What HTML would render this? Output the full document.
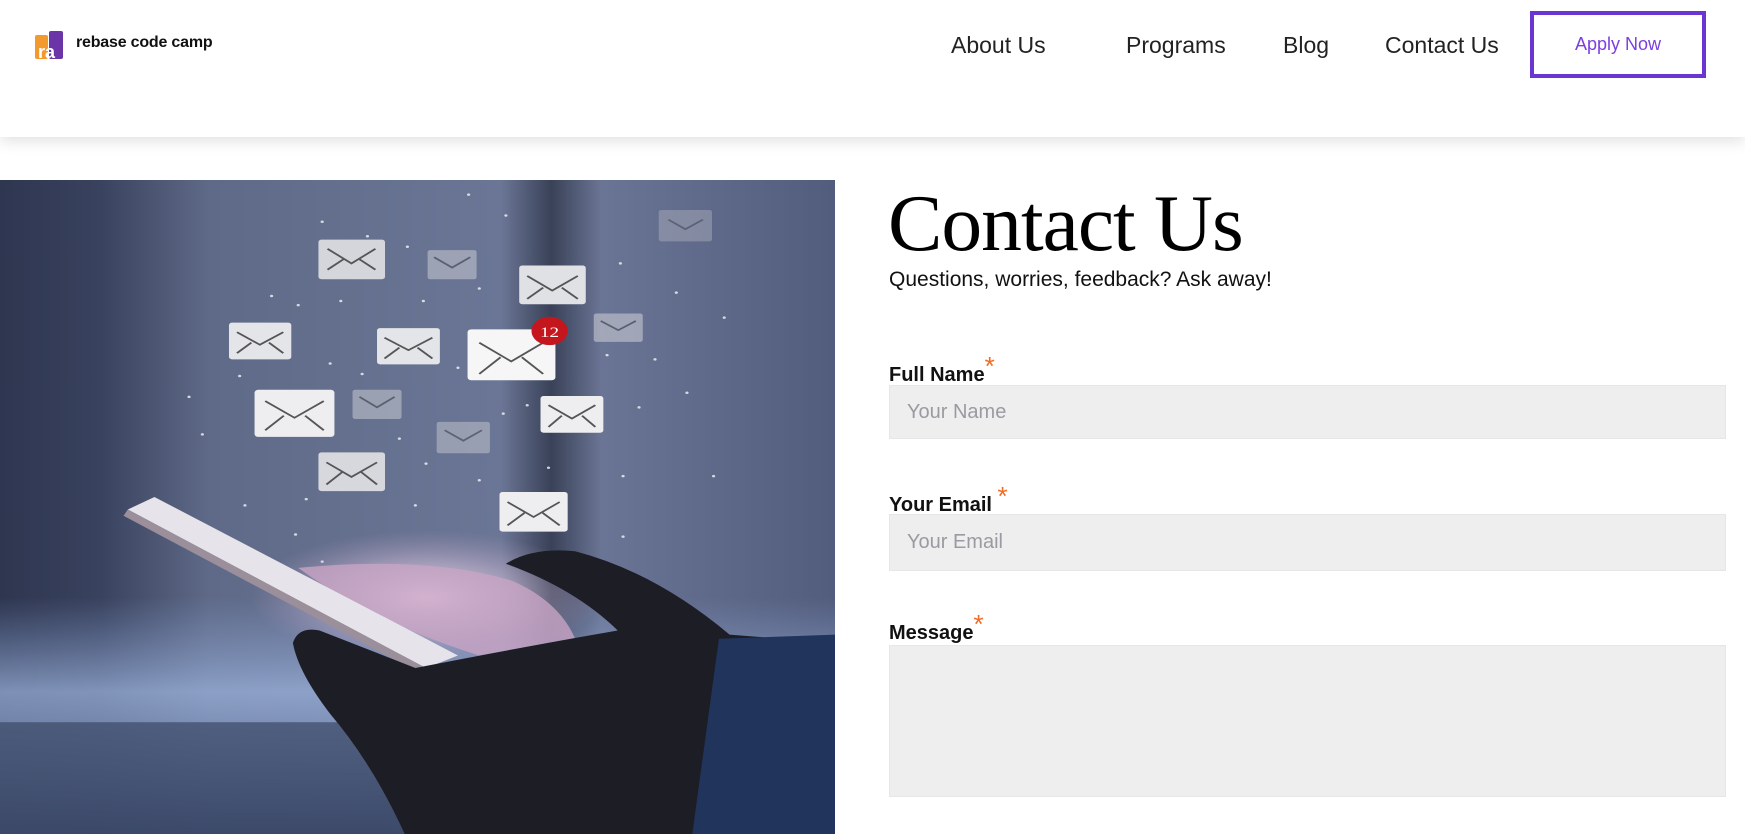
<!DOCTYPE html>
<html><head><meta charset="utf-8"><style>
*{margin:0;padding:0;box-sizing:border-box}
body{width:1745px;height:834px;overflow:hidden;background:#fff;font-family:"Liberation Sans",sans-serif;position:relative}
.hdr{position:absolute;left:0;top:0;width:1745px;height:137px;background:#fff;box-shadow:0 4px 14px rgba(0,0,0,.12);z-index:2}
.logo{position:absolute;left:35px;top:31px;width:28px;height:28px}
.brand{position:absolute;left:76px;top:34px;font-size:16px;font-weight:bold;color:#111;letter-spacing:-.2px}
.nav{position:absolute;top:32px;font-size:23px;color:#222}
.apply{position:absolute;left:1530px;top:11px;width:176px;height:67px;border:4px solid #6a35d1;color:#7b3fe0;font-size:18px;text-align:center;line-height:59px}
.img{position:absolute;left:0;top:180px;width:835px;height:654px}
h1{position:absolute;left:888px;top:184px;font-family:"Liberation Serif",serif;font-weight:normal;font-size:80px;color:#000;letter-spacing:-1px;line-height:1;transform:scaleX(1.02);transform-origin:left}
.sub{position:absolute;left:889px;top:268px;font-size:21px;color:#111}
.lbl{position:absolute;left:889px;font-size:20px;font-weight:bold;color:#111;z-index:1}
.lbl span{color:#f26b21;font-weight:normal;font-size:26px;position:relative;top:-6px}
.inp{position:absolute;left:889px;width:837px;background:#eee;border:1px solid #e6e6e6;color:#9a9aa2;font-size:20px;padding-left:17px}
</style></head><body>
<div class="hdr">
<svg class="logo" viewBox="0 0 28 28"><rect x="0" y="4" width="13" height="24" rx="2" fill="#f29a2e"/><rect x="14" y="0" width="14" height="28" rx="2" fill="#6b35a8"/><text x="3" y="27" font-family="Liberation Sans" font-size="18" font-weight="bold" fill="#fff">ra</text></svg>
<div class="brand">rebase code camp</div>
<div class="nav" style="left:951px">About Us</div>
<div class="nav" style="left:1126px">Programs</div>
<div class="nav" style="left:1283px">Blog</div>
<div class="nav" style="left:1385px">Contact Us</div>
<div class="apply">Apply Now</div>
</div>
<svg class="img" viewBox="0 0 1568 1568" preserveAspectRatio="none">
<defs>
<linearGradient id="bg" x1="0" y1="0" x2="1" y2="0"><stop offset="0" stop-color="#2e3650"/><stop offset=".12" stop-color="#39425e"/><stop offset=".25" stop-color="#5f6a88"/><stop offset=".6" stop-color="#6b7696"/><stop offset=".66" stop-color="#3a4258"/><stop offset=".72" stop-color="#6a7494"/><stop offset="1" stop-color="#525c7c"/></linearGradient>
<linearGradient id="band" x1="0" y1="0" x2="0" y2="1"><stop offset="0" stop-color="#8aa4d6" stop-opacity="0"/><stop offset=".4" stop-color="#9fb6e0" stop-opacity=".7"/><stop offset="1" stop-color="#3b4a70" stop-opacity=".9"/></linearGradient>
<radialGradient id="glow" cx=".5" cy=".5" r=".5"><stop offset="0" stop-color="#f4e8f6"/><stop offset="1" stop-color="#c8a6c8" stop-opacity="0"/></radialGradient>
</defs>
<rect width="1568" height="1568" fill="url(#bg)"/>
<rect y="1000" width="1568" height="568" fill="url(#band)"/>
<rect y="1300" width="1568" height="268" fill="#3c4866" opacity=".7"/>
<g fill="#fff" opacity=".75">
<circle cx="605" cy="100" r="3"/><circle cx="690" cy="135" r="3"/><circle cx="765" cy="160" r="3"/><circle cx="880" cy="35" r="3"/><circle cx="950" cy="85" r="3"/><circle cx="510" cy="278" r="3"/><circle cx="560" cy="300" r="3"/><circle cx="640" cy="290" r="3"/><circle cx="795" cy="290" r="3"/><circle cx="900" cy="260" r="3"/><circle cx="620" cy="440" r="3"/><circle cx="450" cy="470" r="3"/><circle cx="355" cy="520" r="3"/><circle cx="380" cy="610" r="3"/><circle cx="750" cy="620" r="3"/><circle cx="800" cy="680" r="3"/><circle cx="460" cy="780" r="3"/><circle cx="575" cy="765" r="3"/><circle cx="780" cy="780" r="3"/><circle cx="900" cy="720" r="3"/><circle cx="1030" cy="690" r="3"/><circle cx="1170" cy="710" r="3"/><circle cx="1340" cy="710" r="3"/><circle cx="1200" cy="545" r="3"/><circle cx="1290" cy="510" r="3"/><circle cx="1165" cy="200" r="3"/><circle cx="1270" cy="270" r="3"/><circle cx="1360" cy="330" r="3"/><circle cx="555" cy="850" r="3"/><circle cx="1170" cy="855" r="3"/><circle cx="605" cy="915" r="3"/><circle cx="680" cy="465" r="3"/><circle cx="860" cy="450" r="3"/><circle cx="945" cy="560" r="3"/><circle cx="1140" cy="420" r="3"/><circle cx="1230" cy="430" r="3"/><circle cx="990" cy="540" r="3"/>
</g>
<g stroke="#555" stroke-width="4" fill="none">
<g><rect x="598" y="143" width="125" height="95" rx="6" fill="#d4d6dc" stroke="none"/><path d="M615 165 L660 200 L705 165 M615 215 L645 190 M705 215 L675 190"/></g>
<g opacity=".6"><rect x="803" y="168" width="92" height="70" rx="5" fill="#c0c3cc" stroke="none"/><path d="M815 185 L849 210 L883 185"/></g>
<g><rect x="975" y="205" width="125" height="93" rx="6" fill="#e0e1e4" stroke="none"/><path d="M990 230 L1037 265 L1085 230 M990 285 L1020 258 M1085 285 L1055 258"/></g>
<g opacity=".4"><rect x="1237" y="72" width="100" height="75" rx="5" fill="#b8bcc6" stroke="none"/><path d="M1255 95 L1287 118 L1320 95"/></g>
<g><rect x="430" y="342" width="117" height="88" rx="6" fill="#e4e5e8" stroke="none"/><path d="M445 365 L488 395 L532 365 M445 415 L472 390 M532 415 L505 390"/></g>
<g><rect x="708" y="355" width="118" height="87" rx="6" fill="#e4e5e8" stroke="none"/><path d="M722 378 L767 408 L812 378 M722 428 L750 402 M812 428 L784 402"/></g>
<g><rect x="878" y="358" width="165" height="122" rx="7" fill="#f6f6f7" stroke="none"/><path d="M900 390 L960 435 L1020 390 M900 465 L940 425 M1020 465 L980 425"/></g>
<circle cx="1032" cy="362" r="34" fill="#c4161c" stroke="none"/>
<text x="1032" y="376" font-family="Liberation Serif" font-size="36" fill="#fff" stroke="none" text-anchor="middle">12</text>
<g opacity=".6"><rect x="1115" y="320" width="92" height="68" rx="5" fill="#c8cad2" stroke="none"/><path d="M1128 338 L1161 360 L1194 338"/></g>
<g><rect x="478" y="503" width="150" height="113" rx="7" fill="#eeeef0" stroke="none"/><path d="M498 530 L553 570 L608 530 M498 600 L533 565 M608 600 L573 565"/></g>
<g opacity=".6"><rect x="662" y="503" width="92" height="70" rx="5" fill="#bec2cb" stroke="none"/><path d="M675 520 L708 545 L741 520"/></g>
<g><rect x="1015" y="518" width="118" height="88" rx="6" fill="#eeeef0" stroke="none"/><path d="M1030 540 L1074 572 L1118 540 M1030 592 L1055 565 M1118 592 L1093 565"/></g>
<g opacity=".55"><rect x="820" y="580" width="100" height="75" rx="5" fill="#bec2cb" stroke="none"/><path d="M835 600 L870 625 L905 600"/></g>
<g><rect x="598" y="653" width="125" height="93" rx="6" fill="#d6d8dd" stroke="none"/><path d="M613 677 L660 712 L708 677 M613 730 L643 700 M708 730 L678 700"/></g>
<g><rect x="938" y="748" width="128" height="95" rx="6" fill="#eeeef0" stroke="none"/><path d="M953 772 L1002 808 L1051 772 M953 828 L985 798 M1051 828 L1019 798"/></g>
</g>
<ellipse cx="800" cy="1000" rx="330" ry="160" fill="url(#glow)"/>
<path d="M560 930 Q800 900 960 960 Q1050 1010 1080 1100 L900 1140 Q700 1060 560 930Z" fill="#c8a4c4" opacity=".8"/>
<path d="M240 790 L290 760 L860 1140 L800 1170 Z" fill="#e6e4ea"/>
<path d="M240 790 L800 1170 L785 1180 L232 805Z" fill="#9a8f9a"/>
<path d="M950 920 Q1000 880 1080 890 Q1230 940 1370 1090 L1568 1110 L1568 1568 L760 1568 Q700 1400 620 1280 Q560 1180 550 1110 Q560 1070 600 1080 L780 1170 Q980 1120 1160 1080 Q1080 980 950 920Z" fill="#1d1d26"/>
<path d="M1350 1100 L1568 1090 L1568 1568 L1300 1568 Z" fill="#20345c"/>
</svg>
<h1>Contact Us</h1>
<div class="sub">Questions, worries, feedback? Ask away!</div>
<div class="lbl" style="top:357px">Full Name<span>*</span></div>
<div class="inp" style="top:385px;height:54px;line-height:52px">Your Name</div>
<div class="lbl" style="top:487px">Your Email <span>*</span></div>
<div class="inp" style="top:514px;height:57px;line-height:55px">Your Email</div>
<div class="lbl" style="top:615px">Message<span>*</span></div>
<div class="inp" style="top:645px;height:152px"></div>
</body></html>
